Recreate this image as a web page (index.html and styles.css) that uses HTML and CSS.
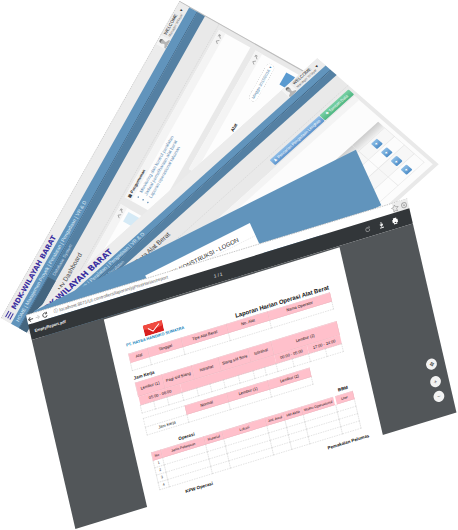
FILE: index.html
```html
<!DOCTYPE html>
<html lang="id">
<head>
<meta charset="utf-8">
<title>MDK-Wilayah Barat</title>
<link rel="stylesheet" href="styles.css">
</head>
<body>
<svg class="defs" aria-hidden="true">
  <symbol id="user" viewBox="0 0 24 24"><rect width="24" height="24" fill="#f4f4f4"/><path d="M2 24v-4l7-3v-3C6 9 7 3 12 3s6 6 3 11v3l7 3v4z" fill="#b5b5b5"/><path d="M8 8c0-4 2-5 4-5s5 1 4 6c-2-3-5-3-8-1z" fill="#777"/></symbol>
  <symbol id="tools" viewBox="0 0 24 12"><path d="M2 9l4-5 4 5M14 9l6-6M16 3h4v4" fill="none" stroke="#999" stroke-width="1.5"/></symbol>
</svg>
<main class="canvas">

  <section class="window dashboard">
    <header class="head">
      <h1 class="brand"><span class="bars"><i></i><i></i><i></i></span>MDK-WILAYAH BARAT</h1>
      <div class="user"><svg class="avatar"><use href="#user"/></svg><p>WELCOME<br><small>Manager Wilayah</small></p><span class="caret">▾</span></div>
    </header>
    <nav class="nav"><a href="#">HOME</a> | <a href="#">Manajemen Proyek</a> | <a href="#">Peralatan</a> | <a href="#">Pengadaan</a> | <a href="#">VR &amp; D</a></nav>
    <div class="sub"><span class="sub-active"></span><a href="#">Database System</a></div>
    <h2 class="title">My Dashboard</h2>
    <div class="panels">
      <div class="panel tall"><div class="panel-head"><svg class="tools"><use href="#tools"/></svg></div><div class="chart"></div></div>
      <div class="panel news">
        <div class="panel-head"><b>▤ Pengumuman</b><svg class="tools"><use href="#tools"/></svg></div>
        <ul>
          <li><a href="#">Monitoring dan kontrol peralatan</a></li>
          <li><a href="#">Jadwal pemeliharaan alat berat</a></li>
          <li><a href="#">Laporan operasional tahunan</a></li>
        </ul>
      </div>
      <div class="panel report">
        <div class="panel-head"><svg class="tools"><use href="#tools"/></svg></div>
        <div class="report-body"><b>Alat</b><button class="pill">Minggu 2015/2016 ▾</button></div>
        <div class="bar"></div>
      </div>
    </div>
  </section>

  <section class="window equipment">
    <header class="head">
      <h1 class="brand"><span class="bars"><i></i><i></i><i></i></span>MDK-WILAYAH BARAT</h1>
      <div class="user"><svg class="avatar"><use href="#user"/></svg><p>WELCOME<br><small>Manager Wilayah</small></p><span class="caret">▾</span></div>
    </header>
    <nav class="nav"><a href="#">HOME</a> | <a href="#">Manajemen Proyek</a> | <a href="#">Peralatan</a> | <a href="#">Pengadaan</a> | <a href="#">VR &amp; D</a></nav>
    <div class="sub"><a href="#">Database Alat Peralatan</a></div>
    <h2 class="title">Data Alat Berat</h2>
    <div class="actions"><button class="blue">♟ Pencarian Pengadaan Lengkap</button><button class="green">✚ Tambah Data</button></div>
    <div class="sheet">
      <div class="sheet-head"></div>
      <table class="list">
        <thead><tr><th></th><th></th><th></th><th></th></tr></thead>
        <tbody>
          <tr><td></td><td></td><td></td><td><button aria-label="Ubah">✦</button></td></tr>
          <tr><td></td><td></td><td></td><td><button aria-label="Ubah">✦</button></td></tr>
          <tr><td></td><td></td><td></td><td><button aria-label="Ubah">✦</button></td></tr>
          <tr><td></td><td></td><td></td><td><button aria-label="Ubah">✦</button></td></tr>
        </tbody>
      </table>
    </div>
  </section>

  <section class="window login">
    <div class="login-box"><h2>DATA KONSTRUKSI - LOGON</h2></div>
  </section>

  <section class="window viewer">
    <div class="address">
      <svg class="browse" viewBox="0 0 64 18"><path d="M14 9H4m4-5L3 9l5 5" fill="none" stroke="#444" stroke-width="2"/><path d="M20 9h9m-4-4l4 4-4 4" fill="none" stroke="#ccc" stroke-width="2"/><path d="M46 6a5 5 0 1 0 1 5M47 3v4h-4" fill="none" stroke="#555" stroke-width="2"/></svg>
      <span class="url">ⓘ localhost:8071/UI.controllers/laporan/jqPrintHarian/report</span>
      <svg class="marks" viewBox="0 0 40 18"><path d="M12 3l2 4 5 1-4 3 1 5-4-2-4 2 1-5-4-3 5-1z" fill="none" stroke="#888" stroke-width="1"/><circle cx="31" cy="9" r="5" fill="none" stroke="#aaa" stroke-width="2"/><circle cx="31" cy="9" r="2" fill="#aaa"/></svg>
    </div>
    <div class="toolbar">
      <b>EmptyReport.pdf</b><span>1 / 1</span>
      <svg class="pdf-icons" viewBox="0 0 80 18"><path d="M11 6a4 4 0 1 0 2 3M13 3v4H9" fill="none" stroke="#ccc" stroke-width="1"/><path d="M38 3v7m-3-3l3 4 3-4M34 14h8" fill="none" stroke="#eee" stroke-width="2"/><path d="M61 6h11v6H61zM63 3h7v3h-7zM63 11h7v4h-7z" fill="#fff"/><path d="M65 11h3v2h-3z" fill="#323639"/></svg>
    </div>
    <div class="stage">
      <article class="page">
        <header class="page-head">
          <div class="company">
            <svg class="logo" viewBox="0 0 40 22"><rect width="40" height="22" rx="2" fill="#d91f1f"/><path d="M0 0h40v10Q20 14 0 8z" fill="#f04a40"/><path d="M9 8l9 8L33 5" fill="none" stroke="#fff" stroke-width="2"/></svg>
            <b>PT. HATSA HANDIKO SUMATRA</b>
          </div>
          <h2>Laporan Harian Operasi Alat Berat</h2>
        </header>
        <table class="info">
          <colgroup><col class="w40"><col class="w70"><col class="w95"><col class="w86"><col></colgroup>
          <tr><th>Alat</th><th>Tanggal</th><th>Tipe Alat Berat</th><th>No. Alat</th><th>Nama Operator</th></tr>
          <tr><td></td><td></td><td></td><td></td><td></td></tr>
        </table>
        <h3>Jam Kerja</h3>
        <table class="hours">
          <colgroup><col span="2" class="w28"><col span="2" class="w31"><col span="2" class="w28"><col span="2" class="w31"><col span="2" class="w24"><col span="4"></colgroup>
          <tr class="upper"><th colspan="2">Lembur (1)</th><th colspan="2">Pagi s/d Siang</th><th colspan="2">Istirahat</th><th colspan="2">Siang s/d Sore</th><th colspan="2">Istirahat</th><th colspan="4">Lembur (2)</th></tr>
          <tr class="lower"><th colspan="3">05:00 - 06:00</th><th colspan="7"></th><th colspan="2">00:00 - 05:00</th><th colspan="2">17:00 - 24:00</th></tr>
          <tr><td></td><td></td><td></td><td></td><td></td><td></td><td></td><td></td><td></td><td></td><td></td><td></td><td></td><td></td></tr>
        </table>
        <table class="total">
          <tr><td></td><th>Normal</th><th>Lembur (1)</th><th>Lembur (2)</th></tr>
          <tr><td>Jam Kerja</td><td></td><td></td><td></td></tr>
        </table>
        <div class="labels"><h3>Operasi</h3><h3>BBM</h3></div>
        <table class="work">
          <colgroup><col class="w20"><col class="w90"><col class="w38"><col class="w90"><col class="w38"><col class="w38"><col class="w68"><col></colgroup>
          <tr><th>No</th><th>Jenis Pekerjaan</th><th>Material</th><th>Lokasi</th><th>Jml. Awal</th><th>HM Akhir</th><th>Waktu Operasional</th><th class="liter">Liter</th></tr>
          <tr><td>1</td><td></td><td></td><td></td><td></td><td></td><td></td><td></td></tr>
          <tr><td>2</td><td></td><td></td><td></td><td></td><td></td><td></td><td></td></tr>
          <tr><td>3</td><td></td><td></td><td></td><td></td><td></td><td></td><td></td></tr>
          <tr><td>4</td><td></td><td></td><td></td><td></td><td></td><td></td><td></td></tr>
        </table>
        <div class="labels foot"><h3>KPW Operasi</h3><h3>Pemakaian Pelumas</h3></div>
      </article>
      <div class="zoom"><button class="fit" aria-label="Paskan">✥</button><button aria-label="Perbesar">+</button><button aria-label="Perkecil">−</button></div>
    </div>
  </section>
</main>
</body>
</html>
```
FILE: styles.css
```css
* { box-sizing: border-box; margin: 0; }
body { background: #fff; font-family: "Liberation Sans", Arial, sans-serif; color: #222; }
button { font-family: inherit; padding: 0; border: 0; }
a { color: inherit; text-decoration: none; }
svg { display: block; flex: none; }
.defs { position: absolute; width: 0; height: 0; }

/* Windows fanned out on a free canvas, drawn at half scale */
.canvas { position: relative; min-height: 100vh; overflow: hidden; }
.window { position: absolute; transform-origin: 0 0; background: #e9e9e9; }
.dashboard { left: 1px; top: 318px; width: 728px; height: 292px; transform: rotate(-60.6deg) scale(.5); border-top: 1px dashed #aaa; border-right: 2px solid #bbb; }
.equipment { left: 30px; top: 316px; width: 772px; height: 320px; transform: rotate(-41.9deg) skewX(7deg) scale(.5); }
.login { left: 34px; top: 311px; width: 720px; height: 122px; transform: rotate(-26.6deg) skewX(-2deg) scale(.5); background: #6194bc; }
.viewer { left: 26px; top: 315px; width: 797px; transform: rotate(-17deg) skewX(-4deg) scale(.5); background: none; }

.head { display: flex; justify-content: space-between; align-items: center; height: 22px; padding: 0 10px 0 6px; background: #ececec; }
.brand { display: flex; align-items: center; gap: 8px; font: bold 14px/22px "DejaVu Sans", sans-serif; color: #3a2fa0; white-space: nowrap; }
.bars { display: grid; gap: 3px; width: 14px; }
.bars i { height: 2px; background: #3a2fa0; }
.user { display: flex; align-items: center; gap: 4px; }
.user p { font-size: 9px; line-height: 9px; width: 52px; white-space: nowrap; overflow: hidden; }
.user small { font-size: 7px; color: #777; }
.avatar { width: 22px; height: 22px; }
.caret { font-size: 9px; }
.nav { height: 19px; padding: 0 10px; background: #6194bc; border-bottom: 1px solid #2d5373; color: #dcebf6; font-size: 10px; line-height: 18px; white-space: nowrap; }
.sub { display: flex; gap: 8px; height: 17px; background: #5480a3; color: #c5dbea; font-size: 9px; line-height: 16px; }
.sub-active { width: 118px; background: #44657f; }
.title { padding-left: 106px; font-size: 13px; font-weight: normal; line-height: 32px; height: 33px; border-bottom: 1px dashed #ccc; color: #444; }

.panels { display: grid; grid-template-columns: 306px 1fr 272px; grid-template-rows: 72px 110px; gap: 12px 0; padding: 5px 10px; }
.panel { background: #fdfdfd; }
.panel-head { display: flex; justify-content: space-between; align-items: center; height: 15px; padding: 0 4px; background: #f4f4f4; font-size: 8px; line-height: 15px; }
.panel-head .tools { margin-left: auto; }
.tools { width: 24px; height: 12px; }
.tall { grid-row: 1 / 3; }
.chart { width: 22px; height: 34px; margin: 6px 6px 0 auto; background: #d5eaf6; }
.news { grid-column: 2 / 4; margin-left: 16px; }
.news ul { padding: 3px 0 0 24px; font-size: 9px; line-height: 11px; color: #5a88b0; }
.report { grid-column: 3; }
.report-body { display: flex; justify-content: space-between; padding: 18px 8px 0 108px; font-size: 9px; }
.pill { height: 18px; padding: 0 5px; border: 1px dashed #bbb; border-radius: 9px; background: #fff; color: #4d7fa8; font-size: 8px; }
.bar { width: 28px; height: 20px; margin: 24px 8px 0 auto; background: #5a9ad0; }

.equipment .brand { font-size: 16px; gap: 2px; }
.equipment .head { padding-left: 0; }
.equipment .nav { height: 14px; line-height: 13px; padding-left: 0; }
.equipment .sub { height: 15px; padding-left: 110px; line-height: 14px; }
.equipment .title { height: 31px; line-height: 24px; padding-left: 222px; }
.actions { display: flex; justify-content: flex-end; gap: 1px; padding: 6px 6px 3px; }
.actions button { height: 15px; padding: 0 6px; color: #fff; font-size: 8px; line-height: 15px; border-radius: 2px; white-space: nowrap; }
.actions .blue { background: linear-gradient(#91bee8, #5b93cc); }
.actions .green { background: linear-gradient(#7bd1a5, #4db682); width: 78px; }
.sheet { height: 206px; margin: 0 8px; padding: 0 8px; background: #fcfcfc; }
.sheet-head { height: 12px; margin: 0 -8px 58px; background: #f4f4f4; }
.list { width: 100%; border-collapse: collapse; table-layout: fixed; }
.list th { height: 17px; background: linear-gradient(#ccc, #f0f0f0); }
.list td { height: 26px; padding: 0; border: 1px solid #e2e2e2; text-align: center; }
.list th:nth-child(n+2), .list td:nth-child(n+2) { width: 70px; }
.list tr:nth-child(odd) td { background: #f7f7f7; }
.list button { width: 16px; height: 16px; background: linear-gradient(#8dbde6, #4d8dc7); color: #fff; font-size: 9px; line-height: 16px; border-radius: 2px; vertical-align: middle; }

.login-box { width: 234px; height: 84px; margin: 36px 254px 0 auto; background: #fff; padding-top: 11px; }
.login h2 { font-size: 12px; line-height: 16px; text-align: center; font-weight: normal; color: #222; white-space: nowrap; border-bottom: 1px dashed #ddd; }
.login { display: flex; }

.address { display: flex; align-items: center; height: 20px; background: #fff; border-top: 1px dashed #999; border-right: 32px solid #ececec; color: #666; font-size: 9px; }
.browse { width: 56px; height: 16px; }
.url { flex: 1; white-space: nowrap; }
.marks { width: 40px; height: 18px; margin-right: -32px; }
.toolbar { display: grid; grid-template-columns: 1fr auto 1fr; align-items: center; height: 31px; padding: 0 20px 0 10px; background: #323639; color: #f1f1f1; font-size: 9px; }
.toolbar b { font-size: 8px; }
.pdf-icons { width: 80px; height: 18px; justify-self: end; }
.stage { position: relative; height: 387px; padding: 3px 154px 0 150px; background: #525659; }
.page { height: 396px; padding: 35px 39px 0 32px; background: #fff; color: #111; }
.page-head { display: flex; justify-content: space-between; height: 45px; }
.company { display: grid; justify-items: center; align-content: start; gap: 1px; color: #0c7db8; font-size: 8px; line-height: 10px; white-space: nowrap; }
.logo { width: 40px; height: 22px; }
.page h2 { font-size: 12px; line-height: 14px; margin: 28px 0 0; white-space: nowrap; }
.page h3 { font-size: 9px; line-height: 12px; }
.page table { width: 100%; border-collapse: collapse; table-layout: fixed; font-size: 8px; line-height: 10px; }
.page th, .page td { padding: 0; height: 16px; border: 1px dashed #ccc; text-align: center; white-space: nowrap; font-weight: normal; }
.page th { background: #ffc0cb; border: 1px solid #ecb7c0; height: 18px; }
.info + h3 { margin: 9px 0 3px; }
.page .upper th { height: 28px; }
.page .lower th { height: 18px; border-width: 0; }
.page .total { width: 348px; margin-top: 10px; }
.labels { display: flex; justify-content: space-between; padding: 19px 8px 4px 60px; }
.page .work { font-size: 7px; }
.page .work th { height: 16px; }
.page .work td { height: 15px; }
.page .work .liter { border-left: 4px solid #fff; }
.labels.foot { padding: 12px 0 0 50px; margin-right: -12px; }
.w20 { width: 20px; } .w24 { width: 24px; } .w28 { width: 28px; } .w31 { width: 31px; }
.w38 { width: 38px; } .w40 { width: 40px; } .w68 { width: 68px; } .w70 { width: 70px; }
.w86 { width: 86px; } .w90 { width: 90px; } .w95 { width: 95px; }
.zoom { position: absolute; right: 16px; top: 269px; display: grid; gap: 8px; }
.zoom button { width: 22px; height: 22px; border-radius: 50%; background: #f3f3f3; color: #555; font-size: 12px; line-height: 22px; }
.zoom .fit { margin-bottom: 6px; }
```
